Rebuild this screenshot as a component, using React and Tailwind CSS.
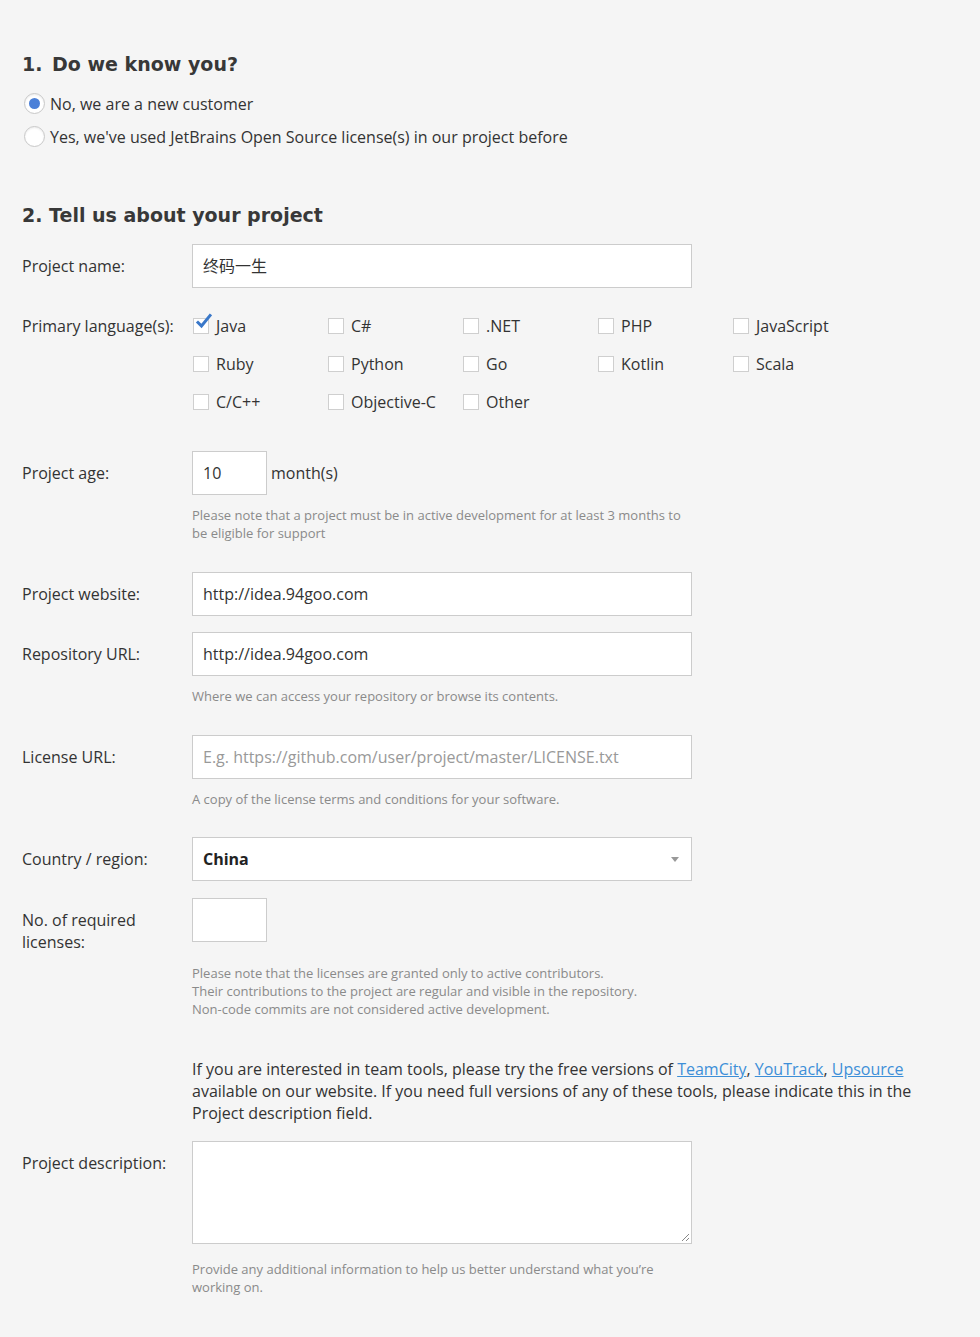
import React from "react";

const body = { fontFamily: '"Open Sans", "Noto Sans CJK SC", sans-serif' };
const head = { fontFamily: '"DejaVu Sans", sans-serif' };

function Radio({ checked, label }) {
  return (
    <label className="flex items-center h-[33px] text-[16px] text-[#333]">
      <span className="w-[21px] h-[21px] rounded-full border border-[#c8c8c8] bg-white flex items-center justify-center mr-[5px] ml-[2px] shadow-[inset_0_1px_2px_rgba(0,0,0,0.08)]">
        {checked && <span className="w-[11px] h-[11px] rounded-full bg-[#4b80d8]" />}
      </span>
      {label}
    </label>
  );
}

function Checkbox({ checked, label }) {
  return (
    <div className="flex items-center h-[38px] w-[135px] text-[16px] text-[#333]">
      <span className="relative w-[16px] h-[16px] border border-[#cfcfcf] bg-white mr-[7px] ml-[1px]">
        {checked && (
          <svg className="absolute -top-[6px] left-[1px]" width="18" height="18" viewBox="0 0 18 18">
            <path d="M3 9.5 L6.5 13 L15 2.5" fill="none" stroke="#3a78c9" strokeWidth="3" strokeLinecap="square" />
          </svg>
        )}
      </span>
      {label}
    </div>
  );
}

function Label({ children, pt = "pt-[11px]" }) {
  return <div className={`w-[170px] shrink-0 text-[16px] leading-[22px] text-[#333] ${pt}`}>{children}</div>;
}

function Input({ value, placeholder, w = "w-[500px]" }) {
  return (
    <div className={`${w} h-[44px] border border-[#cccccc] bg-white px-[10px] flex items-center text-[16px] ${value ? "text-[#333]" : "text-[#999]"}`}>
      {value || placeholder}
    </div>
  );
}

function Note({ children, mt = "mt-[11px]" }) {
  return <div className={`ml-[170px] ${mt} w-[500px] text-[13px] leading-[18px] text-[#8a8a8a]`}>{children}</div>;
}

export default function App() {
  const langs = [
    ["Java", true], ["C#"], [".NET"], ["PHP"], ["JavaScript"],
    ["Ruby"], ["Python"], ["Go"], ["Kotlin"], ["Scala"],
    ["C/C++"], ["Objective-C"], ["Other"],
  ];
  return (
    <div className="min-h-[1337px] bg-[#f5f5f5] pl-[22px] pt-[50px]" style={body}>
      <h2 className="text-[19px] leading-[28px] font-bold text-[#383838]" style={head}>
        1.<span className="ml-[3px]"> </span>Do we know you?
      </h2>
      <div className="mt-[9px]">
        <Radio checked label="No, we are a new customer" />
        <Radio label="Yes, we've used JetBrains Open Source license(s) in our project before" />
      </div>

      <h2 className="mt-[48px] text-[19px] leading-[28px] font-bold text-[#383838]" style={head}>
        2. Tell us about your project
      </h2>

      <div className="mt-[15px] flex">
        <Label>Project name:</Label>
        <Input value="终码一生" />
      </div>

      <div className="mt-[19px] flex">
        <Label pt="pt-[8px]">Primary language(s):</Label>
        <div className="grid grid-cols-5 w-[675px]">
          {langs.map(([l, c]) => (
            <Checkbox key={l} label={l} checked={c} />
          ))}
        </div>
      </div>

      <div className="mt-[30px] flex">
        <Label>Project age:</Label>
        <Input value="10" w="w-[75px]" />
        <span className="ml-[4px] text-[16px] text-[#333] leading-[44px]">month(s)</span>
      </div>
      <Note>Please note that a project must be in active development for at least 3 months to be eligible for support</Note>

      <div className="mt-[30px] flex">
        <Label>Project website:</Label>
        <Input value="http://idea.94goo.com" />
      </div>
      <div className="mt-[16px] flex">
        <Label>Repository URL:</Label>
        <Input value="http://idea.94goo.com" />
      </div>
      <Note>Where we can access your repository or browse its contents.</Note>

      <div className="mt-[30px] flex">
        <Label>License URL:</Label>
        <Input placeholder="E.g. https://github.com/user/project/master/LICENSE.txt" />
      </div>
      <Note>A copy of the license terms and conditions for your software.</Note>

      <div className="mt-[29px] flex">
        <Label>Country / region:</Label>
        <div className="w-[500px] h-[44px] border border-[#cccccc] bg-white px-[10px] flex items-center justify-between text-[16px] font-bold text-[#222]">
          China
          <svg width="8" height="5" viewBox="0 0 8 5" className="mr-[2px]">
            <path d="M0 0 L8 0 L4 5 Z" fill="#999" />
          </svg>
        </div>
      </div>

      <div className="mt-[17px] flex">
        <Label>No. of required licenses:</Label>
        <Input value="" w="w-[75px]" />
      </div>
      <Note>
        Please note that the licenses are granted only to active contributors.<br />
        Their contributions to the project are regular and visible in the repository.<br />
        Non-code commits are not considered active development.
      </Note>

      <div className="ml-[170px] mt-[40px] w-[728px] text-[16px] leading-[22px] text-[#333] font-stretch-[92%]">
        If you are interested in team tools, please try the free versions of{" "}
        <a className="text-[#3d8fd8] underline">TeamCity</a>,{" "}
        <a className="text-[#3d8fd8] underline">YouTrack</a>,{" "}
        <a className="text-[#3d8fd8] underline">Upsource</a> available on our website. If you need full versions of any of these tools, please indicate this in the Project description field.
      </div>

      <div className="mt-[17px] flex">
        <Label>Project description:</Label>
        <div className="relative w-[500px] h-[103px] border border-[#cccccc] bg-white">
          <svg className="absolute right-[1px] bottom-[1px]" width="10" height="10" viewBox="0 0 10 10">
            <path d="M9 2 L2 9 M9 6 L6 9" stroke="#888" strokeWidth="1" />
          </svg>
        </div>
      </div>
      <Note mt="mt-[16px]">Provide any additional information to help us better understand what you’re working on.</Note>
    </div>
  );
}
